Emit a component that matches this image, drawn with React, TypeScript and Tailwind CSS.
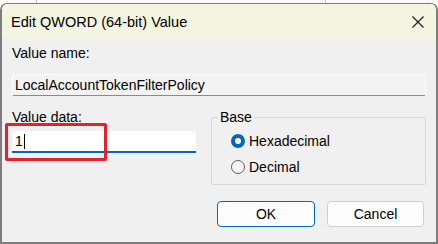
import React from "react";

const font = { fontFamily: '"Liberation Sans", Arial, sans-serif' };

function CloseIcon() {
  return (
    <svg width="12" height="12" viewBox="0 0 12 12" className="block">
      <path d="M0.5 0.5 L11.5 11.5 M11.5 0.5 L0.5 11.5" stroke="#1a1a1a" strokeWidth="1.1" fill="none" />
    </svg>
  );
}

function Radio({ checked, label }: { checked?: boolean; label: string }) {
  return (
    <div className="flex items-center h-4">
      {checked ? (
        <span className="w-[14px] h-[14px] rounded-full bg-[#0067c0] flex items-center justify-center">
          <span className="w-[6px] h-[6px] rounded-full bg-white" />
        </span>
      ) : (
        <span className="w-[14px] h-[14px] rounded-full border border-[#5c5c5c] bg-[#f5f5f5]" />
      )}
      <span className="ml-[4px] text-[14px] text-black leading-4">{label}</span>
    </div>
  );
}

export default function App() {
  return (
    <div className="relative w-[438px] h-[244px] bg-white overflow-hidden" style={font}>
      {/* window behind the dialog */}
      <div className="relative h-[3px] bg-[#fafafa]">
        <div className="absolute left-[36px] top-0 w-px h-[3px] bg-[#c4c4c4]" />
        <div className="absolute left-[325px] top-0 w-px h-[3px] bg-[#c4c4c4]" />
      </div>

      <div className="h-[241px] flex flex-col border-x-2 border-b-2 border-t border-[#7d7d7d] rounded-t-[7px] overflow-hidden">
        {/* title bar */}
        <div className="h-[35px] shrink-0 bg-[#f3f5e1] flex items-center justify-between pl-[9px] pr-[12px]">
          <span className="text-[14.5px] text-black leading-5">Edit QWORD (64-bit) Value</span>
          <CloseIcon />
        </div>

        {/* body */}
        <div className="flex-1 bg-[#f0f0f0] pl-[10px] pr-[10px] flex flex-col">
          <div className="mt-[6px] text-[14px] leading-4 text-black">Value name:</div>
          <div className="mt-[13px] h-[22px] bg-[#f3f3f3] border border-[#fbfbfb] border-b-[#8a8a8a] rounded-[2px] flex items-center pl-[2px] text-[14px] text-black">
            LocalAccountTokenFilterPolicy
          </div>

          <div className="mt-[13px] flex items-start">
            <div className="w-[184px] flex flex-col">
              <div className="text-[14px] leading-4 text-black">Value data:</div>
              <div className="mt-[6px] h-[22px] bg-white border-b-2 border-[#0067c0] rounded-t-[2px] flex items-center pl-[3px] text-[14px] text-black">
                <span>1</span>
                <span className="ml-px w-px h-[15px] bg-black" />
              </div>
            </div>

            <fieldset className="ml-[15px] w-[215px] border border-[#d8d8d8] rounded-[2px] px-[6px] pb-[9px]">
              <legend className="px-[2px] text-[14px] leading-4 text-black">Base</legend>
              <div className="pl-[13px] mt-[8px] flex flex-col gap-[10px]">
                <Radio checked label="Hexadecimal" />
                <Radio label="Decimal" />
              </div>
            </fieldset>
          </div>

          <div className="mt-[16px] flex justify-end gap-[12px] pr-[2px]">
            <button className="w-[98px] h-[26px] bg-[#fdfdfd] border border-[#0067c0] rounded-[4px] text-[14px] text-black">
              OK
            </button>
            <button className="w-[97px] h-[26px] bg-[#fdfdfd] border border-[#d0d0d0] rounded-[4px] text-[14px] text-black">
              Cancel
            </button>
          </div>
        </div>
      </div>

      {/* red highlight around the value data box */}
      <div className="absolute left-[5px] top-[123px] w-[102px] h-[38px] border-[3px] border-[#e8202a] rounded-[2px]" />
    </div>
  );
}
